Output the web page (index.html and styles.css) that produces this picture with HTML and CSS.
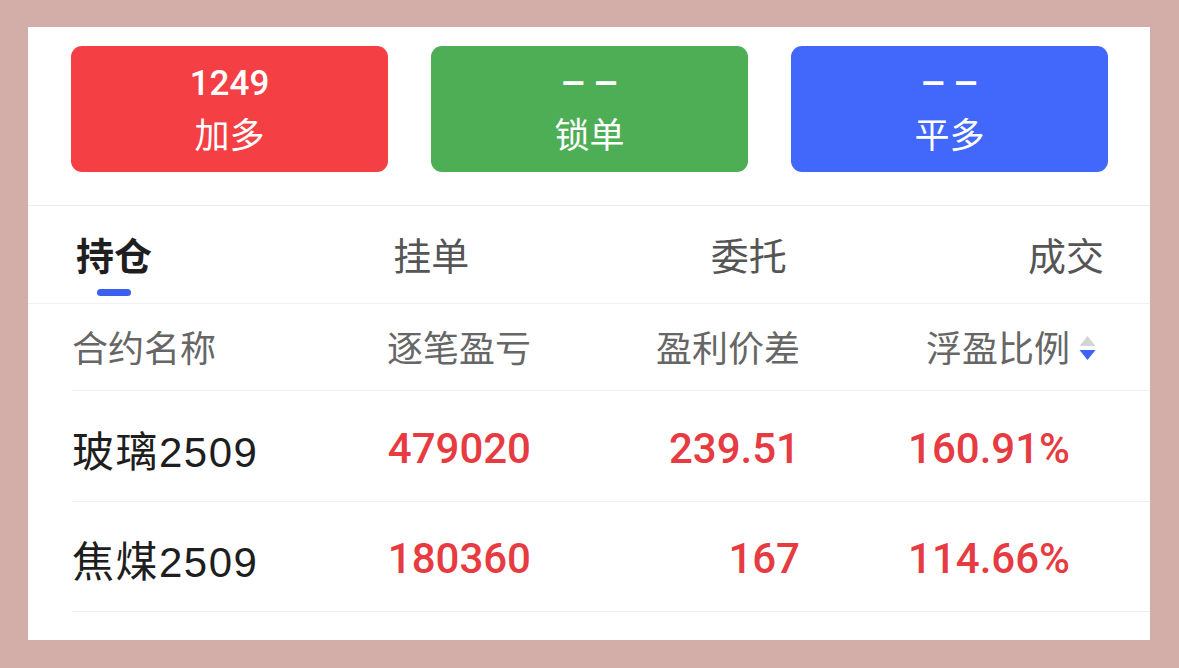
FILE: index.html
```html
<!DOCTYPE html>
<html lang="zh-CN">
<head>
<meta charset="utf-8">
<title>持仓</title>
<link rel="stylesheet" href="styles.css">
</head>
<body>
<div class="panel">
  <div class="actions">
    <div class="action action-red"><div class="action-num">1249</div><div class="action-label">加多</div></div>
    <div class="action action-green"><div class="action-num action-dash">––</div><div class="action-label">锁单</div></div>
    <div class="action action-blue"><div class="action-num action-dash">––</div><div class="action-label">平多</div></div>
  </div>
  <div class="tabs">
    <div class="tab tab-active"><span class="tab-text">持仓</span><span class="tab-bar"></span></div>
    <div class="tab"><span class="tab-text">挂单</span><span class="tab-bar tab-bar-hidden"></span></div>
    <div class="tab"><span class="tab-text">委托</span><span class="tab-bar tab-bar-hidden"></span></div>
    <div class="tab"><span class="tab-text">成交</span><span class="tab-bar tab-bar-hidden"></span></div>
  </div>
  <div class="table">
    <div class="row head">
      <div class="cell c1">合约名称</div>
      <div class="cell num">逐笔盈亏</div>
      <div class="cell num">盈利价差</div>
      <div class="cell num">浮盈比例</div>
      <div class="cell sort">
        <svg width="19" height="25" viewBox="0 0 19 25" aria-hidden="true">
          <polygon points="9.5,0 17.5,10 1.5,10" fill="#d4d4d4"/>
          <polygon points="1.5,14 17.5,14 9.5,24" fill="#3f63f2"/>
        </svg>
      </div>
    </div>
    <div class="row data">
      <div class="cell c1 name">玻璃2509</div>
      <div class="cell num val">479020</div>
      <div class="cell num val">239.51</div>
      <div class="cell num val">160.91%</div>
      <div class="cell sort"></div>
    </div>
    <div class="row data">
      <div class="cell c1 name">焦煤2509</div>
      <div class="cell num val">180360</div>
      <div class="cell num val">167</div>
      <div class="cell num val">114.66%</div>
      <div class="cell sort"></div>
    </div>
  </div>
</div>
</body>
</html>
```

FILE: styles.css
```css
* { box-sizing: border-box; }
html, body { margin: 0; padding: 0; }
body {
  background: #d3ada7;
  width: 1179px;
  height: 668px;
  overflow: hidden;
  font-family: "Noto Sans CJK SC", "Noto Sans", sans-serif;
}
.panel {
  margin: 27px 0 0 28px;
  width: 1122px;
  height: 613px;
  background: #ffffff;
}
.actions {
  display: flex;
  gap: 43px;
  padding: 19px 42px 33px 43px;
  border-bottom: 1px solid #ededed;
}
.action {
  flex: 1;
  height: 126px;
  border-radius: 11px;
  color: #ffffff;
  display: flex;
  flex-direction: column;
  align-items: center;
}
.action-red { background: #f43f44; }
.action-green { background: #4dae56; }
.action-blue { background: #4267fb; }
.action-num {
  font-family: Roboto, "Liberation Sans", sans-serif;
  font-weight: 500;
  font-size: 35px;
  line-height: 40px;
  margin-top: 18px;
  height: 40px;
}
.action-dash {
  font-size: 40px;
  letter-spacing: 7px;
  padding-left: 7px;
  font-weight: 500;
}
.action-label {
  font-size: 35px;
  line-height: 40px;
  margin-top: 9px;
}
.tabs {
  display: flex;
  justify-content: space-between;
  padding: 0 46px 0 48px;
  border-bottom: 1px solid #efefef;
}
.tab {
  display: flex;
  flex-direction: column;
  align-items: center;
  padding-top: 28px;
}
.tab-text {
  font-size: 38px;
  line-height: 40px;
  color: #555555;
}
.tab-active .tab-text { color: #1f1f1f; font-weight: 700; }
.tab-bar {
  width: 34px;
  height: 7px;
  border-radius: 4px;
  background: #3b5ff0;
  margin-top: 15px;
  margin-bottom: 7px;
}
.tab-bar-hidden { visibility: hidden; }
.table { margin-left: 44px; }
.row {
  display: grid;
  grid-template-columns: 190px 269px 269px 270px 27px;
  align-items: center;
  border-bottom: 1px solid #efefef;
}
.head { height: 87px; }
.data { height: 111px; }
.data:last-child { height: 110px; }
.cell { white-space: nowrap; }
.num { text-align: right; }
.head .cell {
  font-size: 36px;
  color: #666666;
  line-height: 40px;
  padding-bottom: 2px;
}
.sort { padding-left: 8px; display: flex; }
.head .sort { padding-top: 4px; }
.name {
  font-family: "Liberation Sans", "Noto Sans CJK SC", sans-serif;
  font-size: 42px;
  font-weight: 400;
  color: #1e1e1e;
  letter-spacing: 1.5px;
  padding-top: 4px;
}
.val {
  font-family: Roboto, "Liberation Sans", sans-serif;
  font-size: 42px;
  font-weight: 500;
  color: #e63b41;
  padding-top: 4px;
}
```
